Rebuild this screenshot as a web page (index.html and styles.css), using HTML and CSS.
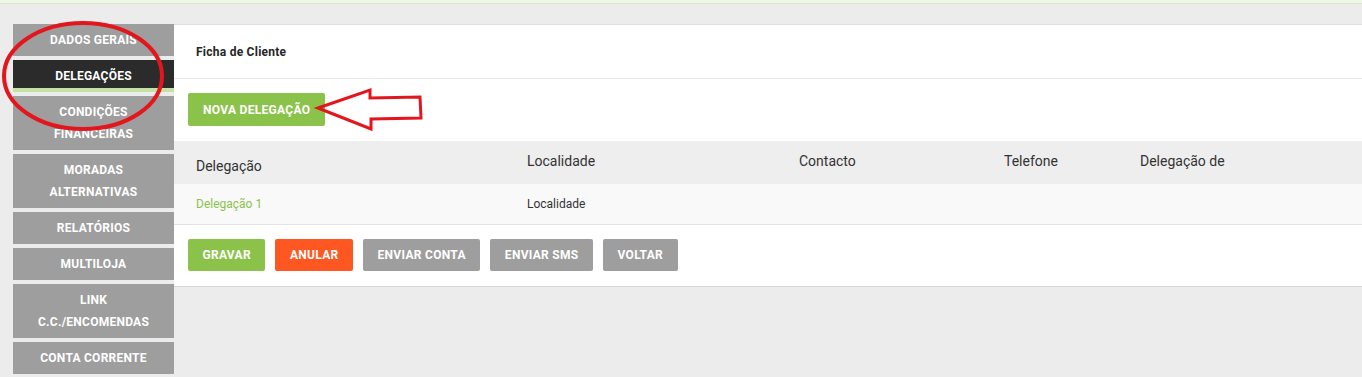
FILE: index.html
```html
<!DOCTYPE html>
<html lang="pt">
<head>
<meta charset="utf-8">
<title>Ficha de Cliente</title>
<link rel="stylesheet" href="styles.css">
</head>
<body>
<div class="topbar"></div>
<div class="layout">
  <nav class="sidebar">
    <a class="nav-item">DADOS GERAIS</a>
    <a class="nav-item active">DELEGAÇÕES</a>
    <a class="nav-item">CONDIÇÕES<br>FINANCEIRAS</a>
    <a class="nav-item">MORADAS<br>ALTERNATIVAS</a>
    <a class="nav-item">RELATÓRIOS</a>
    <a class="nav-item">MULTILOJA</a>
    <a class="nav-item">LINK<br>C.C./ENCOMENDAS</a>
    <a class="nav-item">CONTA CORRENTE</a>
    <a class="nav-item nav-more"></a>
  </nav>
  <main class="panel">
    <div class="panel-header">Ficha de Cliente</div>
    <div class="toolbar">
      <button class="btn btn-green btn-tall">NOVA DELEGAÇÃO</button>
    </div>
    <div class="table">
      <div class="thead">
        <div class="th th-first">Delegação</div>
        <div class="th">Localidade</div>
        <div class="th">Contacto</div>
        <div class="th">Telefone</div>
        <div class="th">Delegação de</div>
      </div>
      <div class="trow">
        <div class="td link">Delegação 1</div>
        <div class="td">Localidade</div>
        <div class="td"></div>
        <div class="td"></div>
        <div class="td"></div>
      </div>
    </div>
    <div class="actions">
      <button class="btn btn-green">GRAVAR</button>
      <button class="btn btn-orange">ANULAR</button>
      <button class="btn btn-grey">ENVIAR CONTA</button>
      <button class="btn btn-grey">ENVIAR SMS</button>
      <button class="btn btn-grey">VOLTAR</button>
    </div>
  </main>
</div>
<svg class="annotations" width="1362" height="377" viewBox="0 0 1362 377">
  <ellipse cx="83" cy="76" rx="79" ry="53" fill="none" stroke="#e3161e" stroke-width="4"/>
  <polygon points="318,108 370,90 370,98 420,97 421,118 371,119 371,129" fill="none" stroke="#e3161e" stroke-width="3" stroke-linejoin="miter"/>
</svg>
</body>
</html>
```
FILE: styles.css
```css
html, body {
  margin: 0;
  padding: 0;
}
body {
  background: #ececec;
  font-family: Roboto, "Liberation Sans", Arial, sans-serif;
  color: #333;
  width: 1362px;
  height: 377px;
  overflow: hidden;
  position: relative;
}
.topbar {
  height: 3px;
  background: #eef7e7;
  border-bottom: 1px solid #d9e8cd;
}
.layout {
  display: flex;
  align-items: flex-start;
  padding: 20px 0 0 13px;
}
.sidebar {
  width: 161px;
  flex: 0 0 161px;
  display: flex;
  flex-direction: column;
  gap: 4px;
}
.nav-item {
  display: block;
  background: #9e9e9e;
  color: #fff;
  font-size: 12px;
  font-weight: 700;
  letter-spacing: 0.25px;
  line-height: 22px;
  padding: 5px 4px;
  text-align: center;
}
.nav-item.active {
  background: #2b2b2b;
  box-shadow: inset 0 -4px 0 #c5e1a5;
}
.nav-more {
  height: 22px;
}
.panel {
  flex: 1;
  background: #fff;
  border-top: 1px solid #dedede;
  box-shadow: 0 1px 0 #d6d6d6;
}
.panel-header {
  height: 53px;
  display: flex;
  align-items: center;
  padding-left: 22px;
  font-size: 12px;
  font-weight: 700;
  letter-spacing: 0.25px;
  color: #262626;
  border-bottom: 1px solid #e8e8e8;
}
.toolbar {
  padding: 14px 14px 15px;
  display: flex;
}
.btn {
  border: 0;
  border-radius: 2px;
  color: #fff;
  font-family: Roboto, "Liberation Sans", Arial, sans-serif;
  font-size: 12px;
  font-weight: 700;
  letter-spacing: 0.3px;
  height: 32px;
  padding: 0 14.5px;
  cursor: pointer;
}
.btn-tall {
  height: 33px;
  padding: 0 15px;
}
.btn-green { background: #8bc34a; }
.btn-orange { background: #ff5722; }
.btn-grey { background: #9e9e9e; }
.table {
  display: flex;
  flex-direction: column;
}
.thead, .trow {
  display: grid;
  grid-template-columns: 331px 272px 205px 136px 1fr;
}
.thead {
  height: 43px;
  background: #eeeeee;
}
.th {
  font-size: 14px;
  padding: 12px 0 0 22px;
  line-height: 16px;
}
.th-first {
  padding-top: 17px;
}
.trow {
  height: 40px;
  background: #f9f9f9;
  border-bottom: 1px solid #e3e3e3;
}
.td {
  font-size: 12px;
  line-height: 14px;
  padding: 13px 0 0 22px;
}
.td.link {
  color: #8bc34a;
}
.actions {
  display: flex;
  gap: 10px;
  padding: 14px 14px 15px;
}
.annotations {
  position: absolute;
  top: 0;
  left: 0;
  pointer-events: none;
}
```
